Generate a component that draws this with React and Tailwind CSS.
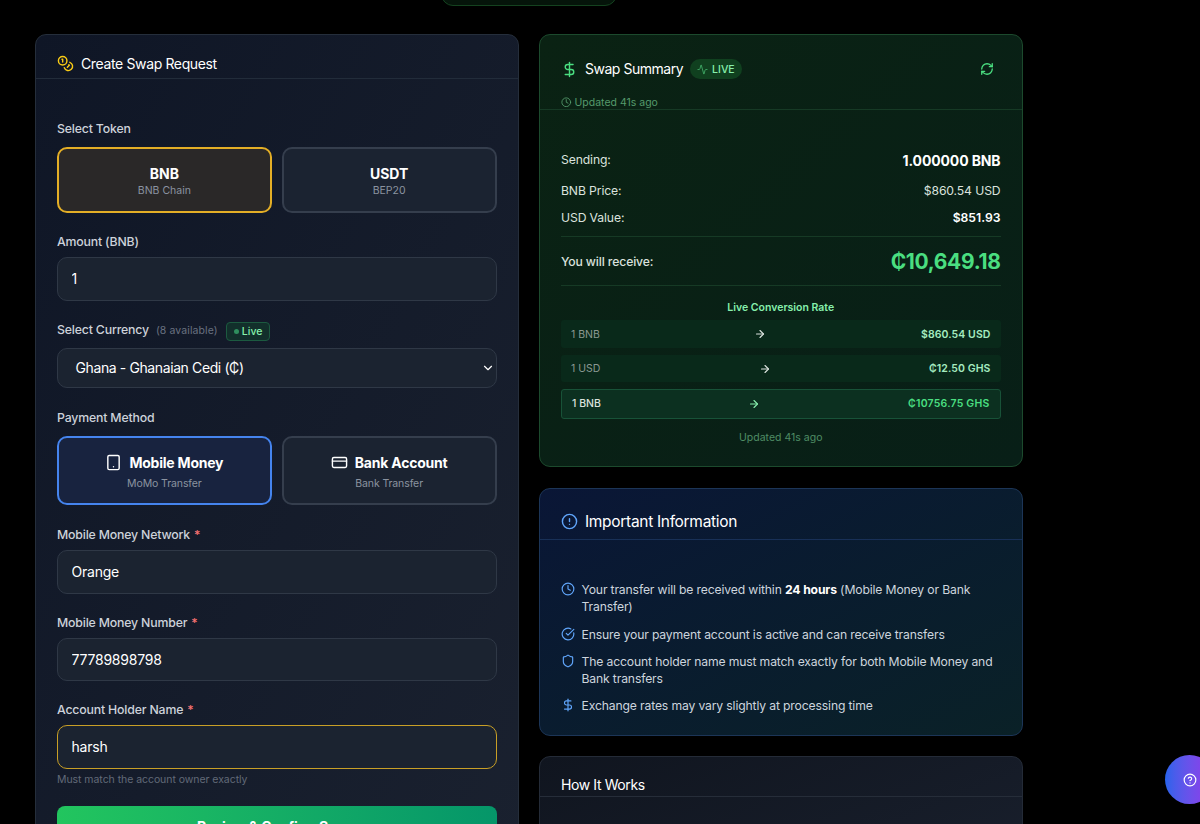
import React, { useState } from 'react';
import {
  Activity,
  ArrowRight,
  ChevronDown,
  CircleAlert,
  CircleCheckBig,
  CircleQuestionMark,
  Clock,
  Coins,
  CreditCard,
  DollarSign,
  RefreshCw,
  Shield,
  Tablet,
} from 'lucide-react';

const tokens = [
  { id: 'BNB', sub: 'BNB Chain' },
  { id: 'USDT', sub: 'BEP20' },
];

const methods = [
  { id: 'momo', icon: Tablet, name: 'Mobile Money', sub: 'MoMo Transfer' },
  { id: 'bank', icon: CreditCard, name: 'Bank Account', sub: 'Bank Transfer' },
];

const rates = [
  { from: '1 BNB', to: '$860.54 USD' },
  { from: '1 USD', to: '₵12.50 GHS' },
];

function Label({ children, required }) {
  return (
    <label className="flex h-[18px] items-center pt-px text-[12.3px] font-medium tracking-[-0.014em] text-[#cdd2da]">
      {children}
      {required && <span className="ml-1 text-[#f87171]">*</span>}
    </label>
  );
}

function Field({ label, value, onChange, required, active }) {
  return (
    <div className="flex flex-col gap-1.5">
      <Label required={required}>{label}</Label>
      <input
        value={value}
        onChange={(e) => onChange(e.target.value)}
        className={`h-[43.5px] w-full rounded-[10px] border bg-[#1b2330] px-[13.5px] text-[14px] tracking-[-0.016em] text-white outline-none ${active ? 'border-[#c89f26]' : 'border-[#2f3846]'}`}
      />
    </div>
  );
}

function CreateSwap() {
  const [token, setToken] = useState('BNB');
  const [method, setMethod] = useState('momo');
  const [amount, setAmount] = useState('1');
  const [network, setNetwork] = useState('Orange');
  const [number, setNumber] = useState('77789898798');
  const [holder, setHolder] = useState('harsh');

  return (
    <div className="h-[860px] w-[483.5px] shrink-0 rounded-[11px] border border-[#252e3b] bg-linear-to-br from-[#0f1626] to-[#1a212f]">
      <div className="flex h-[44px] items-end gap-[7px] border-b border-[#222c3a] px-[21px] pb-[5px]">
        <Coins className="mb-px size-[17px] text-[#facc15]" />
        <h2 className="text-[14px] leading-[18px] tracking-[-0.026em] text-white">Create Swap Request</h2>
      </div>

      <div className="flex flex-col gap-[20px] px-[21px] pt-[41px]">
        <div className="flex flex-col gap-[9px]">
          <Label>Select Token</Label>
          <div className="grid grid-cols-2 gap-[10px]">
            {tokens.map((t) => (
              <button
                key={t.id}
                onClick={() => setToken(t.id)}
                className={`flex h-[66px] flex-col items-center justify-center rounded-[10px] border-2 pt-[3px] ${token === t.id ? 'border-[#e3ae26] bg-[#2a2828]' : 'border-[#353e4d] bg-[#1b2331]'}`}
              >
                <span className="text-[14px] leading-[18px] font-bold text-white">{t.id}</span>
                <span className="text-[10.5px] leading-[16px] text-[#8b93a0]">{t.sub}</span>
              </button>
            ))}
          </div>
        </div>

        <Field label="Amount (BNB)" value={amount} onChange={setAmount} />

        <div className="flex flex-col gap-[8px]">
          <div className="flex h-[19px] items-center">
            <Label>Select Currency</Label>
            <span className="ml-[7px] pt-px text-[10.5px] tracking-[0.01em] text-[#697180]">(8 available)</span>
            <span className="mt-[2px] ml-[8px] flex h-[19px] items-center gap-[3px] rounded-[4px] border border-[#1c5a40] bg-[#122f2b] px-[7px] text-[10.5px] font-medium text-[#86efac]">
              <span className="size-[5px] rounded-full bg-[#2f8f5e]" />
              <span className="pt-px">Live</span>
            </span>
          </div>
          <div className="flex h-[40.5px] items-center justify-between rounded-[10px] border border-[#2f3846] bg-[#1b2330] pr-px pl-[17.5px] text-[14px] tracking-[-0.028em] text-white">
            <span>Ghana - Ghanaian Cedi (₵)</span>
            <ChevronDown className="size-[14px] text-white" />
          </div>
        </div>

        <div className="mt-px flex flex-col gap-[9px]">
          <Label>Payment Method</Label>
          <div className="grid grid-cols-2 gap-[10px]">
            {methods.map(({ id, icon: Icon, name, sub }) => (
              <button
                key={id}
                onClick={() => setMethod(id)}
                className={`flex h-[69px] flex-col items-center justify-center gap-[4px] rounded-[10px] border-2 pt-[4px] ${method === id ? 'border-[#4584ee] bg-[#18233f]' : 'border-[#353e4d] bg-[#1b2331]'}`}
              >
                <span className="flex items-center gap-[7px] text-[14px] leading-[18px] font-bold tracking-[-0.016em] text-white">
                  <Icon className="size-[17px]" />
                  {name}
                </span>
                <span className="text-[10.5px] leading-[16px] tracking-[-0.01em] text-[#8b93a0]">{sub}</span>
              </button>
            ))}
          </div>
        </div>

        <div className="mt-px">
          <Field label="Mobile Money Network" value={network} onChange={setNetwork} required />
        </div>
        <Field label="Mobile Money Number" value={number} onChange={setNumber} required />

        <div className="-mb-[2px]">
          <Field label="Account Holder Name" value={holder} onChange={setHolder} required active />
          <p className="mt-[3px] text-[10.5px] leading-[16px] tracking-[-0.005em] text-[#626a78]">
            Must match the account owner exactly
          </p>
        </div>

        <button className="h-[42px] rounded-[8px] bg-linear-to-r from-[#22c55e] to-[#059669] text-[14px] font-bold tracking-[-0.01em] text-white">
          Review &amp; Confirm Swap
        </button>
      </div>
    </div>
  );
}

function SwapSummary() {
  return (
    <div className="h-[433px] rounded-[11px] border border-[#1c4a2d] bg-linear-to-br from-[#0a2213] to-[#081f17]">
      <div className="flex h-[74.5px] flex-col border-b border-[#163a25] px-[21px] pt-[24px]">
        <div className="flex h-[20px] items-center">
          <DollarSign className="size-[17px] text-[#4ade80]" />
          <h2 className="ml-[7px] text-[14px] leading-[18px] tracking-[-0.034em] text-white">Swap Summary</h2>
          <span className="ml-[7px] flex h-[20px] items-center gap-[4px] rounded-full bg-[#10401f] px-[7px] text-[10.5px] font-medium text-[#86efac]">
            <Activity className="size-[11px] text-[#3fa765]" />
            <span className="pt-px">LIVE</span>
          </span>
          <RefreshCw strokeWidth={2.25} className="mr-[7px] ml-auto size-[14px] text-[#4ade80]" />
        </div>
        <p className="mt-[15px] flex h-[16px] items-center gap-[3px] text-[10.5px] text-[#559a6b]">
          <Clock className="size-[10.5px]" />
          <span className="pt-px">Updated 41s ago</span>
        </p>
      </div>

      <div className="px-[21px] pt-[41px] text-[12.2px] tracking-[-0.01em] text-[#dbe2de]">
        <div className="flex h-[20px] items-center justify-between">
          <span>Sending:</span>
          <span className="text-[14px] font-bold text-white">1.000000 BNB</span>
        </div>
        <div className="mt-[12px] flex h-[18px] items-center justify-between">
          <span>BNB Price:</span>
          <span>$860.54 USD</span>
        </div>
        <div className="mt-[9px] flex h-[18px] items-center justify-between">
          <span>USD Value:</span>
          <span className="font-semibold tracking-normal text-white">$851.93</span>
        </div>
        <div className="mt-[8px] flex h-[50px] items-center justify-between border-y border-[#163a25] pt-[3px]">
          <span className="font-medium">You will receive:</span>
          <span className="text-[21px] font-bold tracking-[-0.016em] text-[#4ade80]">₵10,649.18</span>
        </div>

        <div className="mt-[14px] flex flex-col text-[10.5px] tracking-normal">
          <h3 className="h-[16px] text-center leading-[16px] font-semibold text-[#86efac]">Live Conversion Rate</h3>
          <div className="mt-[4.5px] flex flex-col gap-[7px]">
            {rates.map((r) => (
              <div key={r.from} className="flex h-[27.5px] items-center justify-between rounded-[3px] bg-[#09291a] px-[10px] pt-[2px]">
                <span className="text-[#8a9891]">{r.from}</span>
                <ArrowRight strokeWidth={2.25} className="mb-px size-[12px] text-[#dbe2de]" />
                <span className="font-semibold tracking-[0.008em] text-[#a5ecc0]">{r.to}</span>
              </div>
            ))}
            <div className="flex h-[29.5px] items-center justify-between rounded-[3px] border border-[#185238] bg-[#0c3020] px-[10px] pt-px">
              <span className="font-medium text-[#dbe2de]">1 BNB</span>
              <ArrowRight strokeWidth={2.25} className="mb-px size-[12px] text-[#86efac]" />
              <span className="font-semibold tracking-[0.02em] text-[#4ade80]">₵10756.75 GHS</span>
            </div>
          </div>
          <p className="mt-[11px] text-center leading-[16px] text-[#4f8d65]">Updated 41s ago</p>
        </div>
      </div>
    </div>
  );
}

const notes = [
  {
    icon: Clock,
    text: (
      <>
        Your transfer will be received within <strong className="font-bold text-white">24 hours</strong> (Mobile Money or Bank Transfer)
      </>
    ),
  },
  { icon: CircleCheckBig, text: 'Ensure your payment account is active and can receive transfers' },
  { icon: Shield, text: 'The account holder name must match exactly for both Mobile Money and Bank transfers' },
  { icon: DollarSign, text: 'Exchange rates may vary slightly at processing time' },
];

function ImportantInfo() {
  return (
    <div className="h-[248px] rounded-[11px] border border-[#1c3557] bg-linear-to-br from-[#0a1636] to-[#0a2127]">
      <div className="flex h-[51px] items-end gap-[7px] border-b border-[#183057] px-[21px] pb-[7px]">
        <CircleAlert className="mb-[2px] size-[17px] text-[#60a5fa]" />
        <h2 className="text-[15.5px] leading-[20px] tracking-[-0.02em] text-white">Important Information</h2>
      </div>
      <ul className="flex flex-col gap-[10px] px-[21px] pt-[41px] text-[12.2px] leading-[17.3px] tracking-[-0.0125em] text-[#cdd5de]">
        {notes.map(({ icon: Icon, text }, i) => (
          <li key={i} className="flex items-start gap-[6.5px]">
            <Icon className="mt-px size-[14px] shrink-0 text-[#60a5fa]" />
            <span>{text}</span>
          </li>
        ))}
      </ul>
    </div>
  );
}

export default function App() {
  return (
    <div className="relative h-[824px] w-[1200px] overflow-hidden bg-black font-['Inter',sans-serif]">
      <div className="-mt-[42px] mr-[583px] ml-[441px] h-[48px] rounded-[12px] border border-[#14421f] bg-[#05140a]" />

      <div className="mt-[28px] flex items-start gap-[20.5px] pl-[35px]">
        <CreateSwap />
        <div className="flex w-[483.5px] shrink-0 flex-col gap-[21px]">
          <SwapSummary />
          <ImportantInfo />
          <div className="-mt-px h-[200px] rounded-[11px] border border-[#242b37] bg-linear-to-br from-[#10151f] to-[#1b2230]">
            <div className="flex h-[40px] items-end border-b border-[#262d39] px-[21px] pb-[2px]">
              <h2 className="text-[14px] leading-[18px] tracking-[-0.028em] text-white">How It Works</h2>
            </div>
          </div>
        </div>
      </div>

      <button className="absolute top-[755px] left-[1165px] flex size-[49px] items-center justify-center rounded-full bg-linear-to-r from-[#2563eb] to-[#9333ea] text-white">
        <CircleQuestionMark className="size-[14px]" />
      </button>
    </div>
  );
}
